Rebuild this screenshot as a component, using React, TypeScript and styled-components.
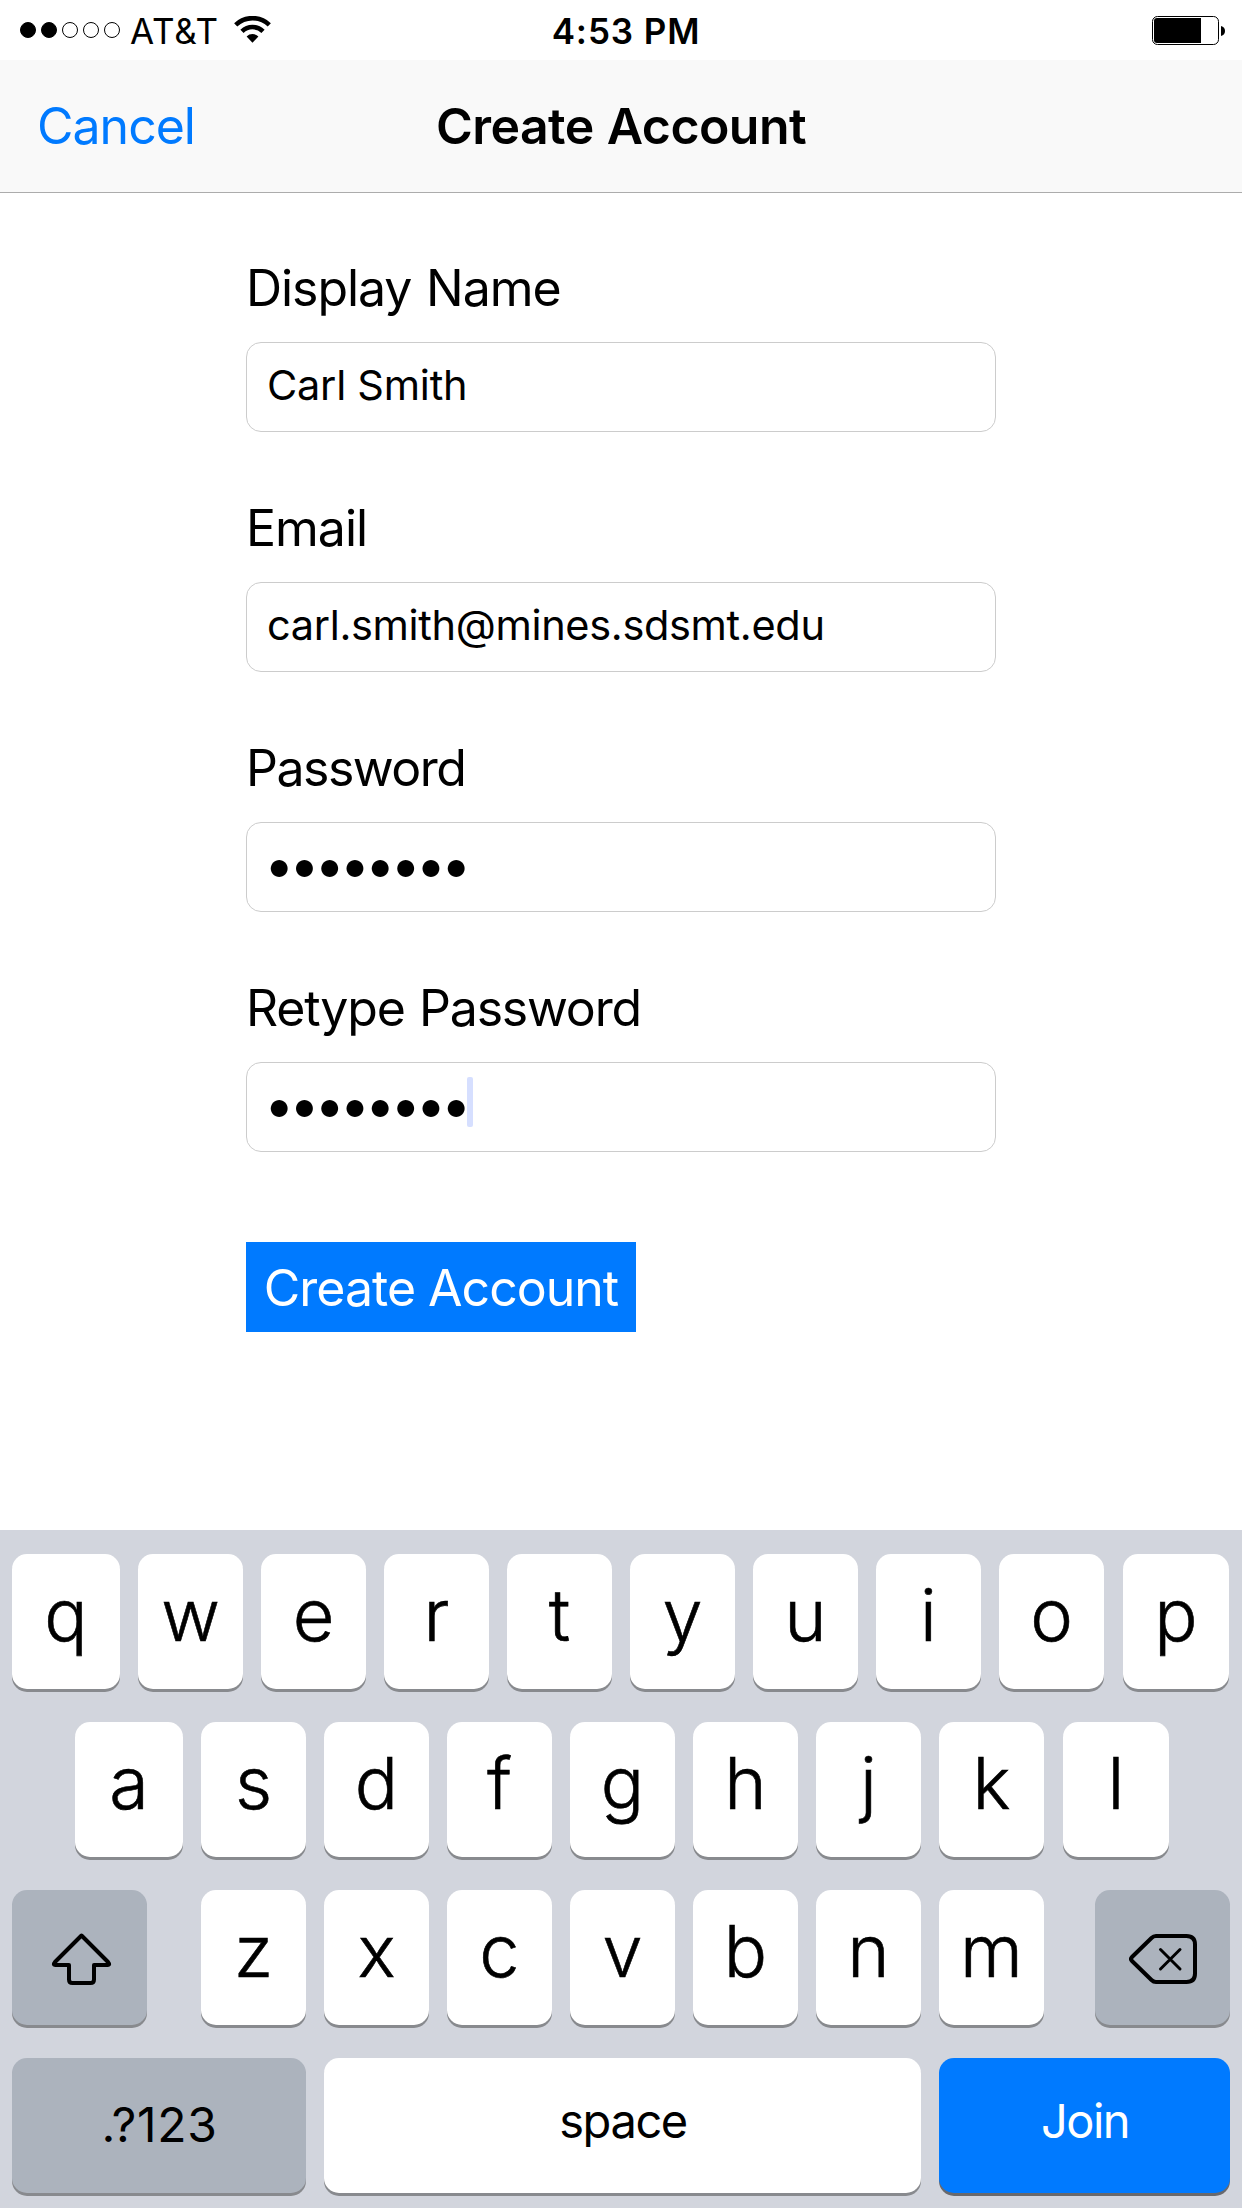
import React from "react";
import styled, { createGlobalStyle } from "styled-components";

const Global = createGlobalStyle`
  * { box-sizing: border-box; }
  body { margin: 0; background: #fff; }
`;

const Screen = styled.div`
  width: 1242px;
  height: 2208px;
  display: flex;
  flex-direction: column;
  background: #fff;
  color: #000;
  font-family: Inter, "Liberation Sans", sans-serif;
  white-space: nowrap;
  overflow: hidden;
`;

const StatusBar = styled.div`
  height: 60px;
  display: grid;
  grid-template-columns: 1fr auto 1fr;
  padding: 0 16px 0 20px;
  font-size: 35px;
  line-height: 62px;
`;

const StatusLeft = styled.div`
  display: flex;
  align-items: flex-start;
`;

const Signal = styled.div`
  display: flex;
  gap: 5px;
  margin: 22px 10px 0 0;
`;

const SignalDot = styled.span<{ $on: boolean }>`
  width: 16px;
  height: 16px;
  border-radius: 50%;
  border: 1px solid #000;
  background: ${(p) => (p.$on ? "#000" : "transparent")};
`;

const Carrier = styled.span`
  width: 104px;
  letter-spacing: 0.8px;
`;

const WifiIcon = styled.svg`
  width: 38px;
  height: 28px;
  margin-top: 16px;
`;

const Clock = styled.span`
  padding-left: 6px;
  font-weight: 600;
  letter-spacing: 0.9px;
`;

const StatusRight = styled.div`
  display: flex;
  justify-content: flex-end;
`;

const BatteryIcon = styled.svg`
  width: 74px;
  height: 30px;
  margin-top: 16px;
`;

const NavBar = styled.header`
  height: 133px;
  display: grid;
  grid-template-columns: 1fr auto 1fr;
  padding: 0 37px;
  background: #f9f9f9;
  border-bottom: 1px solid #acacac;
  font-size: 50px;
  line-height: 132px;
`;

const NavLink = styled.a`
  color: #007aff;
  letter-spacing: -1px;
`;

const NavTitle = styled.h1`
  margin: 0;
  font-size: 50px;
  font-weight: 600;
  letter-spacing: -0.55px;
  word-spacing: 1px;
`;

const Form = styled.form`
  width: 750px;
  height: 1337px;
  margin: 0 auto;
  padding-top: 65px;
  display: flex;
  flex-direction: column;
  align-items: flex-start;
`;

const Field = styled.label`
  width: 100%;
  margin-bottom: 66px;
`;

const FieldLabel = styled.div<{ $spacing: number }>`
  height: 60px;
  margin-bottom: 24px;
  font-size: 50px;
  line-height: 60px;
  letter-spacing: ${(p) => p.$spacing}px;
  word-spacing: 1.6px;
`;

const FieldBox = styled.div`
  height: 90px;
  display: flex;
  padding-left: 20px;
  border: 1px solid #ccc;
  border-radius: 15px;
`;

const FieldText = styled.span<{ $spacing: number }>`
  font-size: 41.5px;
  line-height: 84px;
  letter-spacing: ${(p) => p.$spacing}px;
`;

const Mask = styled.span`
  width: 202px;
  margin-left: -3px;
  margin-right: 1px;
  font-size: 54px;
  line-height: 83px;
  letter-spacing: -5.1px;
`;

const Caret = styled.span`
  width: 6px;
  height: 50px;
  margin-top: 14px;
  border-radius: 2px;
  background: #d6dfff;
`;

const SubmitButton = styled.button`
  width: 390px;
  height: 90px;
  margin-top: 24px;
  padding: 0;
  border: 0;
  background: #007aff;
  color: #fff;
  font: 400 50px/92px Inter, sans-serif;
  letter-spacing: -1px;
`;

const Keyboard = styled.div`
  flex: 1;
  display: flex;
  flex-direction: column;
  gap: 33px;
  padding-top: 24px;
  background: #d2d5dd;
`;

const KeyRow = styled.div<{ $inset: number }>`
  display: flex;
  gap: 18px;
  padding-left: ${(p) => p.$inset}px;
`;

type Tone = "light" | "dark" | "blue";
const faces: Record<Tone, string> = { light: "#fff", dark: "#acb3bd", blue: "#007aff" };

const Key = styled.div<{ $w: number; $ml?: number; $tone?: Tone }>`
  flex: none;
  width: ${(p) => p.$w}px;
  height: 135px;
  margin-left: ${(p) => p.$ml ?? 0}px;
  border-radius: 15px;
  background: ${(p) => faces[p.$tone ?? "light"]};
  color: ${(p) => (p.$tone === "blue" ? "#fff" : "#000")};
  box-shadow: 0 3px 0 ${(p) => (p.$tone === "blue" ? "#68696d" : "#888a8e")};
  font-size: 72px;
  font-weight: 300;
  -webkit-text-stroke: 0.6px currentColor;
  line-height: 122px;
  text-align: center;
`;

const KeyCaption = styled.div<{ $size?: number; $line: number; $spacing: number }>`
  padding-left: 1px;
  font-size: ${(p) => p.$size ?? 47}px;
  font-weight: 400;
  -webkit-text-stroke: 0;
  line-height: ${(p) => p.$line}px;
  letter-spacing: ${(p) => p.$spacing}px;
`;

const KeyIcon = styled.svg`
  display: block;
  width: 135px;
  height: 135px;
  fill: none;
  stroke: #000;
  stroke-width: 4;
  stroke-linejoin: round;
  stroke-linecap: round;
`;

const fields = [
  { label: "Display Name", labelSpacing: -1.05, value: "Carl Smith", valueSpacing: -0.25 },
  { label: "Email", labelSpacing: -1, value: "carl.smith@mines.sdsmt.edu", valueSpacing: -0.34 },
  { label: "Password", labelSpacing: -1.5, masked: true },
  { label: "Retype Password", labelSpacing: -1.2, masked: true, focused: true },
];

const top = "qwertyuiop".split("");
const middle = "asdfghjkl".split("");
const bottom = "zxcvbnm".split("");

const letterWidth = (i: number, n: number) => (i === 0 ? 108 : i === n - 1 ? 106 : 105);

export default function App() {
  return (
    <Screen>
      <Global />
      <StatusBar>
        <StatusLeft>
          <Signal>
            {[0, 1, 2, 3, 4].map((i) => (
              <SignalDot key={i} $on={i < 2} />
            ))}
          </Signal>
          <Carrier>AT&amp;T</Carrier>
          <WifiIcon viewBox="0 0 38 28">
            <g fill="none" stroke="#000" strokeWidth="4.6">
              <path d="M1.7 8.8A24.5 24.5 0 0 1 35.3 8.8" />
              <path d="M8 15.3A15 15 0 0 1 29 15.3" />
            </g>
            <path d="M12.600 20.400A8.600 8.600 0 0 1 24.400 20.400L18.500 26.800Z" />
          </WifiIcon>
        </StatusLeft>
        <Clock>4:53 PM</Clock>
        <StatusRight>
          <BatteryIcon viewBox="0 0 74 30">
            <rect x="0.5" y="0.5" width="66" height="28" rx="5" fill="none" stroke="#000" />
            <path d="M5 2H49V27H5Q2 27 2 24V5Q2 2 5 2Z" />
            <path d="M69 10Q73 11 73 15T69 20Z" />
          </BatteryIcon>
        </StatusRight>
      </StatusBar>
      <NavBar>
        <NavLink>Cancel</NavLink>
        <NavTitle>Create Account</NavTitle>
      </NavBar>
      <Form>
        {fields.map((f) => (
          <Field key={f.label}>
            <FieldLabel $spacing={f.labelSpacing}>{f.label}</FieldLabel>
            <FieldBox>
              {f.masked ? <Mask>••••••••</Mask> : <FieldText $spacing={f.valueSpacing ?? 0}>{f.value}</FieldText>}
              {f.focused && <Caret />}
            </FieldBox>
          </Field>
        ))}
        <SubmitButton type="button">Create Account</SubmitButton>
      </Form>
      <Keyboard>
        <KeyRow $inset={12}>
          {top.map((c, i) => (
            <Key key={c} $w={letterWidth(i, top.length)} $ml={i === top.length - 1 ? 1 : 0}>
              {c}
            </Key>
          ))}
        </KeyRow>
        <KeyRow $inset={75}>
          {middle.map((c, i) => (
            <Key key={c} $w={letterWidth(i, middle.length)} $ml={i === middle.length - 1 ? 1 : 0}>
              {c}
            </Key>
          ))}
        </KeyRow>
        <KeyRow $inset={12}>
          <Key $w={135} $tone="dark">
            <KeyIcon viewBox="0 0 135 135">
              <path d="M69.5 45.5L43 72Q40.500 75 43.500 75H57V89.500Q57 93 60.500 93H78.500Q82 93 82 89.500V75H95.500Q98.500 75 96 72Z" />
            </KeyIcon>
          </Key>
          {bottom.map((c, i) => (
            <Key key={c} $w={105} $ml={i === 0 ? 36 : 0}>
              {c}
            </Key>
          ))}
          <Key $w={135} $ml={33} $tone="dark">
            <KeyIcon viewBox="0 0 135 135">
              <path d="M61 46H91.500Q100 46 100 54.500V83.500Q100 92 91.500 92H61Q58.500 92 56.500 90L37 71Q35 69 37 67L56.500 48Q58.500 46 61 46Z" />
              <path strokeWidth="3" d="M65.500 59.500L85 79M85 59.500L65.500 79" />
            </KeyIcon>
          </Key>
        </KeyRow>
        <KeyRow $inset={12}>
          <Key $w={294} $tone="dark">
            <KeyCaption $size={48} $line={133} $spacing={0.7}>.?123</KeyCaption>
          </Key>
          <Key $w={597}>
            <KeyCaption $line={126} $spacing={-1.4}>space</KeyCaption>
          </Key>
          <Key $w={291} $tone="blue">
            <KeyCaption $line={126} $spacing={-1.5}>Join</KeyCaption>
          </Key>
        </KeyRow>
      </Keyboard>
    </Screen>
  );
}
